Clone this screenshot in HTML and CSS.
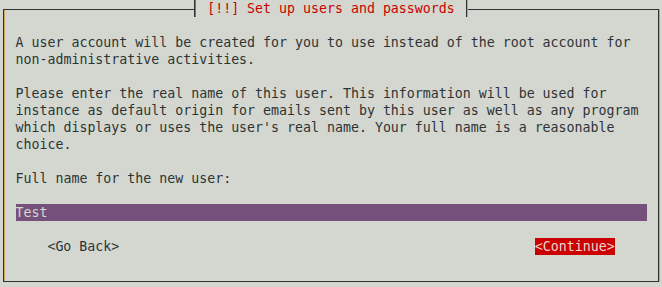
FILE: index.html
```html
<!DOCTYPE html>
<html>
<head>
<meta charset="utf-8">
<link rel="stylesheet" href="styles.css">
</head>
<body>
<div class="dialog">
  <div class="title-row"><span class="title"> [!!] Set up users and passwords </span></div>
  <div class="content">
    <p class="para">A user account will be created for you to use instead of the root account for<br>non-administrative activities.</p>
    <p class="para">Please enter the real name of this user. This information will be used for<br>instance as default origin for emails sent by this user as well as any program<br>which displays or uses the user's real name. Your full name is a reasonable<br>choice.</p>
    <p class="para">Full name for the new user:</p>
    <div class="field"><span class="field-text">Test</span></div>
    <div class="buttons">
      <span class="btn">&lt;Go Back&gt;</span>
      <span class="btn btn-active">&lt;Continue&gt;</span>
    </div>
  </div>
</div>
</body>
</html>
```

FILE: styles.css
```css
html, body {
  margin: 0;
  padding: 0;
  background: #d3d7cf;
}
body {
  font-family: "DejaVu Sans Mono", "Liberation Mono", monospace;
  font-size: 13.27px;
  line-height: 17px;
  color: #2e3436;
  width: 662px;
  height: 287px;
  overflow: hidden;
}
.dialog {
  margin: 9px 0 0 3px;
  width: 656px;
  height: 273px;
  box-sizing: border-box;
  border: 1px solid #2e3436;
  box-shadow: inset 1px 0 0 #c9a45c, 1px 0 0 #c9a45c;
}
.title-row {
  margin-top: -10px;
  height: 17px;
  padding-left: 190px;
}
.title {
  display: inline-block;
  height: 17px;
  white-space: pre;
  color: #cc0000;
  background: #d3d7cf;
  border-left: 1px solid #2e3436;
  border-right: 1px solid #2e3436;
  box-shadow: inset 1px 0 0 #5a78b0, 1px 0 0 #c9a45c;
  padding: 0 3.6px 0 4.2px;
  vertical-align: top;
}
.content {
  padding-left: 11.5px;
}
.para {
  margin: 17px 0 0 0;
  white-space: nowrap;
}
.field {
  margin-top: 17px;
  width: 631px;
  height: 17px;
  background: #75507b;
  color: #d3d7cf;
}
.field-text {
  white-space: pre;
}
.buttons {
  margin: 17px 0 0 -11.5px;
  padding: 0 43.3px 0 43.4px;
  display: flex;
  justify-content: space-between;
  height: 17px;
}
.btn {
  white-space: pre;
}
.btn-active {
  background: #cc0000;
  color: #e8d8d0;
}
```
